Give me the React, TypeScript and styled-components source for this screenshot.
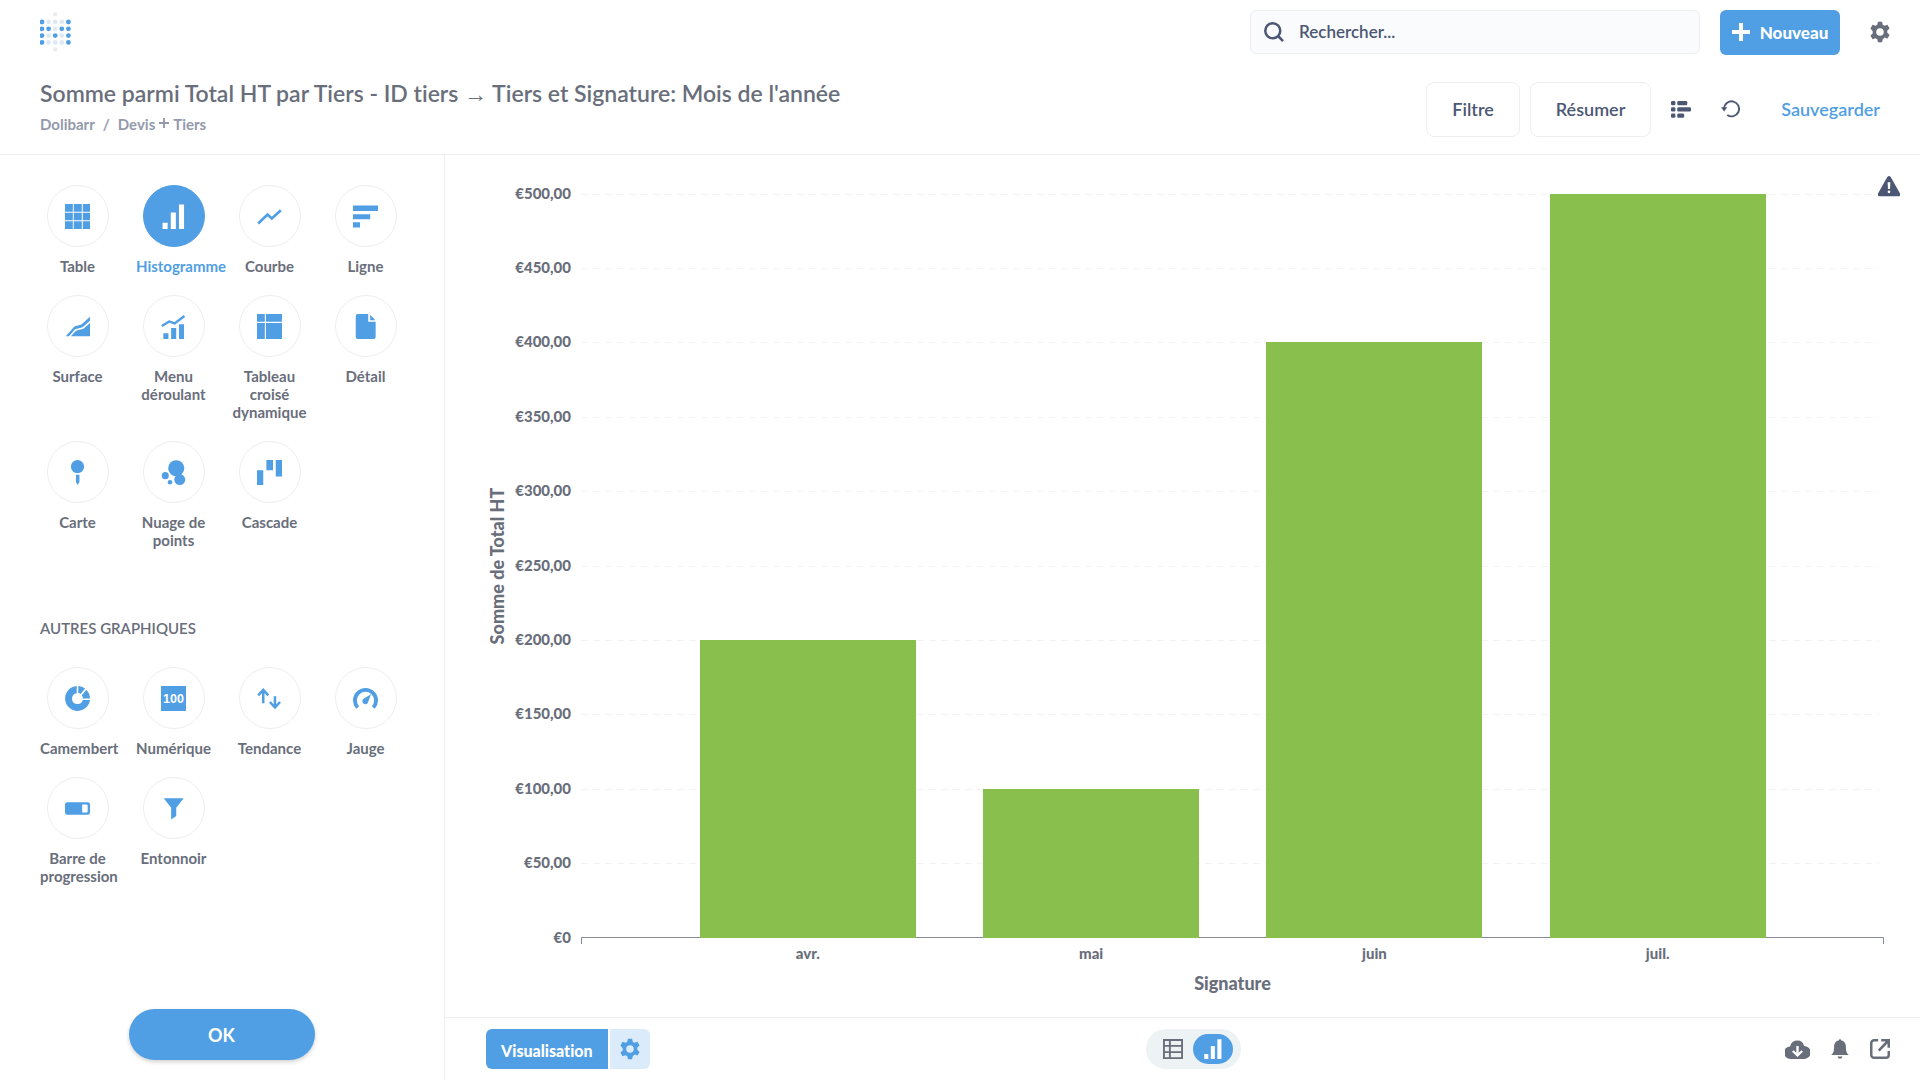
import React, { useLayoutEffect, useRef, useState } from "react";
import styled, { createGlobalStyle, css } from "styled-components";

const color = {
  brand: "#509ee3",
  brandLight: "#dcebfa",
  dark: "#4c5773",
  medium: "#696e7b",
  light: "#949aab",
  border: "#eeeef0",
  green: "#88bf4d",
};

const GlobalStyle = createGlobalStyle`
  *, *::before, *::after { box-sizing: border-box; }
  html, body, #root { height: 100%; }
  body {
    margin: 0;
    background: #fff;
    color: ${color.medium};
    font-family: Lato, "Liberation Sans", sans-serif;
    font-size: 15px;
    font-variant-ligatures: none;
  }
  button, input { font-family: inherit; font-variant-ligatures: inherit; }
  h1, h2, ul { margin: 0; padding: 0; }
`;

const Page = styled.div`
  display: flex;
  flex-direction: column;
  height: 100vh;
`;

const AppBar = styled.header`
  display: flex;
  align-items: center;
  gap: 20px;
  height: 64px;
  padding: 0 20px 0 40px;
`;

const HomeLink = styled.a`
  display: flex;
  margin-right: auto;
`;

const SearchBox = styled.label`
  display: flex;
  align-items: center;
  gap: 15px;
  width: 450px;
  height: 44px;
  padding: 0 13px;
  border: 1px solid ${color.border};
  border-radius: 6px;
  background: #f9fbfc;
  color: ${color.dark};
`;

const SearchInput = styled.input`
  flex: 1;
  min-width: 0;
  border: 0;
  outline: 0;
  padding: 0 0 2px;
  background: transparent;
  color: ${color.dark};
  font-size: 17px;
  font-weight: 600;
  &::placeholder { color: ${color.dark}; opacity: 1; }
`;

const plainButton = css`
  display: inline-flex;
  align-items: center;
  justify-content: center;
  padding: 0;
  border: 0;
  background: transparent;
  cursor: pointer;
`;

const NewButton = styled.button`
  ${plainButton}
  gap: 10px;
  width: 120px;
  height: 45px;
  border-radius: 6px;
  background: ${color.brand};
  color: #fff;
  font-size: 17px;
  font-weight: 900;
`;

const IconButton = styled.button<{ $tone?: string; $wide?: boolean }>`
  ${plainButton}
  width: ${(p) => (p.$wide ? 46 : 40)}px;
  height: 40px;
  color: ${(p) => p.$tone ?? color.medium};
`;

const QuestionHeader = styled.div`
  display: flex;
  align-items: center;
  justify-content: space-between;
  height: 91px;
  padding: 0 40px;
  border-bottom: 1px solid ${color.border};
`;

const TitleBlock = styled.div`
  display: flex;
  flex-direction: column;
  gap: 5px;
  padding-bottom: 7px;
`;

const Title = styled.h1`
  color: ${color.medium};
  font-size: 23px;
  line-height: 30px;
  font-weight: 600;
`;

const Arrow = styled.span`
  font-family: "Liberation Sans", sans-serif;
  font-weight: 400;
`;

const Breadcrumb = styled.nav`
  display: flex;
  gap: 8px;
  color: ${color.light};
  font-size: 15px;
  line-height: 20px;
  font-weight: 700;
`;

const CrumbLink = styled.a`
  display: inline-flex;
  align-items: center;
  gap: 4px;
  color: inherit;
  text-decoration: none;
  svg { margin-bottom: 2px; }
`;

const Actions = styled.div`
  display: flex;
  align-items: center;
  gap: 10px;
`;

const OutlineButton = styled.button`
  ${plainButton}
  height: 55px;
  padding: 0 25px;
  border: 1px solid ${color.border};
  border-radius: 8px;
  color: ${color.dark};
  font-size: 18px;
  font-weight: 600;
`;

const SaveButton = styled.button`
  ${plainButton}
  height: 40px;
  margin-left: 20px;
  color: ${color.brand};
  font-size: 18px;
  font-weight: 600;
`;

const Body = styled.div`
  display: flex;
  flex: 1;
  min-height: 0;
`;

const Sidebar = styled.aside`
  display: flex;
  flex-direction: column;
  width: 445px;
  padding: 30px 41px 20px 40px;
  border-right: 1px solid ${color.border};
`;

const ChartGrid = styled.ul`
  display: grid;
  grid-template-columns: repeat(4, 75px);
  gap: 20px 21px;
  list-style: none;
`;

const ChartOption = styled.button<{ $active?: boolean }>`
  ${plainButton}
  flex-direction: column;
  justify-content: flex-start;
  gap: 10px;
  width: 100%;
  color: ${(p) => (p.$active ? color.brand : color.medium)};
  font-size: 15px;
  line-height: 18px;
  font-weight: 700;
`;

const Disc = styled.span<{ $active?: boolean }>`
  display: flex;
  align-items: center;
  justify-content: center;
  width: 62px;
  height: 62px;
  padding: 1px 1px 0 0;
  border: 1px solid ${(p) => (p.$active ? color.brand : color.border)};
  border-radius: 50%;
  background: ${(p) => (p.$active ? color.brand : "#fff")};
  color: ${(p) => (p.$active ? "#fff" : color.brand)};
`;

const OptionLabel = styled.span`
  width: 100%;
`;

const SectionTitle = styled.h2`
  margin: 69px 0 29px;
  color: ${color.medium};
  font-size: 15px;
  line-height: 20px;
  font-weight: 600;
  text-transform: uppercase;
`;

const DoneButton = styled.button`
  ${plainButton}
  align-self: center;
  width: 186px;
  height: 51px;
  margin-top: auto;
  border-radius: 26px;
  background: ${color.brand};
  box-shadow: 0 2px 4px rgba(0, 0, 0, 0.18);
  color: #fff;
  font-size: 18px;
  font-weight: 700;
`;

const Main = styled.main`
  display: flex;
  flex: 1;
  flex-direction: column;
  min-width: 0;
`;

const ChartArea = styled.div`
  position: relative;
  flex: 1;
  min-height: 0;
  overflow: hidden;
`;

const ChartSvg = styled.svg`
  display: block;
  width: 100%;
  height: 100%;
  font-weight: 900;
`;

const Warning = styled.span`
  position: absolute;
  top: 20px;
  right: 20px;
  display: flex;
  color: ${color.dark};
`;

const Footer = styled.footer`
  display: grid;
  grid-template-columns: 1fr auto 1fr;
  align-items: center;
  height: 63px;
  padding: 0 20px 0 41px;
  border-top: 1px solid ${color.border};
`;

const VizGroup = styled.div`
  display: flex;
  gap: 2px;
`;

const VizButton = styled.button`
  ${plainButton}
  height: 40px;
  padding: 2px 15px 0;
  border-radius: 6px 0 0 6px;
  background: ${color.brand};
  color: #fff;
  font-size: 16px;
  font-weight: 900;
`;

const VizSettings = styled.button`
  ${plainButton}
  width: 40px;
  height: 40px;
  border-radius: 0 6px 6px 0;
  background: ${color.brandLight};
  color: ${color.brand};
`;

const Toggle = styled.div`
  display: flex;
  align-items: center;
  height: 40px;
  padding: 0 8px 0 7px;
  border-radius: 20px;
  background: #edf2f5;
`;

const ToggleButton = styled.button<{ $active?: boolean }>`
  ${plainButton}
  width: 40px;
  height: 30px;
  border-radius: 15px;
  background: ${(p) => (p.$active ? color.brand : "transparent")};
  color: ${(p) => (p.$active ? "#fff" : color.medium)};
`;

const FooterActions = styled.div`
  display: flex;
  justify-content: flex-end;
`;

type IconProps = { size?: number; viewBox?: string; children: React.ReactNode };
const Icon = ({ size = 25, viewBox = "0 0 32 32", children }: IconProps) => (
  <svg width={size} height={size} viewBox={viewBox} fill="currentColor" aria-hidden="true">
    {children}
  </svg>
);

const GEAR =
  "M13 1h6l1 4.400 2.600 1.500 4.300-1.300 3 5.200-3.300 3.100v3.200l3.300 3.100-3 5.200-4.300-1.300L20 26.600 19 31h-6l-1-4.400-2.600-1.500-4.300 1.300-3-5.200 3.300-3.100v-3.200L2.100 10.800l3-5.200 4.300 1.300L12 5.400zM16 10.500a5.500 5.500 0 1 0 0 11 5.500 5.500 0 1 0 0-11z";
const GearIcon = ({ size = 22 }: { size?: number }) => (
  <Icon size={size}><path fillRule="evenodd" d={GEAR} /></Icon>
);

const BarsIcon = ({ size = 25 }: { size?: number }) => (
  <Icon size={size}>
    <path d="M2 24h6.500v8H2zM12.500 11H19v21h-6.500zM23 .500h6.500V32H23z" />
  </Icon>
);

const LOGO_DOTS: [number, number, boolean][] = [];
["10001", "11011", "10101", "10001"].forEach((row, r) =>
  [...row].forEach((cell, c) => LOGO_DOTS.push([2 + c * 6.6, 10 + r * 6.8, cell === "1"]))
);
const Logo = () => (
  <svg width="32" height="40" viewBox="0 0 32 40" aria-hidden="true">
    {LOGO_DOTS.map(([x, y, on]) => (
      <circle key={`${x}-${y}`} cx={x} cy={y} r="2.400" fill={on ? color.brand : "#dfe9f3"} />
    ))}
    <circle cx="15.200" cy="2.300" r="2.200" fill="#e9edf2" />
    <circle cx="15.200" cy="37.500" r="2.200" fill="#e9edf2" />
  </svg>
);

type Option = { label: string; icon: React.ReactNode; active?: boolean };

const mainCharts: Option[] = [
  {
    label: "Table",
    icon: <Icon><path d="M0 0h10v10H0zM11.200 0h10.300v10H11.200zM22.800 0H32v10h-9.200zM0 11.200h10v9.600H0zM11.200 11.200h10.300v9.600H11.200zM22.800 11.200H32v9.600h-9.200zM0 22h10v10H0zM11.200 22h10.300v10H11.200zM22.800 22H32v10h-9.200z" /></Icon>,
  },
  { label: "Histogramme", active: true, icon: <BarsIcon /> },
  {
    label: "Courbe",
    icon: <Icon><path d="M1.500 25 13.500 13.500l5.500 5L30.500 8" fill="none" stroke="currentColor" strokeWidth="3.400" /></Icon>,
  },
  { label: "Ligne", icon: <Icon><path d="M0 2h32v7H0zM0 13h22v6.500H0zM0 23.500h9V30H0z" /></Icon> },
  {
    label: "Surface",
    icon: <Icon><path d="M1 28.500 12 16l9-2.500L32 3.500v5L22.500 17 13 19.500 5 28.500zM7.500 28.500 14 21.500l9.500-2.500L32 11.500v17z" /></Icon>,
  },
  {
    label: "Menu déroulant",
    icon: (
      <Icon>
        <path d="M3 24.500h6.500V32H3zM13 18h6.500v14H13zM23 13h6.500v19H23z" />
        <path d="M1 15.500 10.500 9.500l7 2.500L30 2.500" fill="none" stroke="currentColor" strokeWidth="3" />
      </Icon>
    ),
  },
  { label: "Tableau croisé dynamique", icon: <Icon><path d="M0 0h10v10H0zM11.500 0H32v10H11.500zM0 11.500h10V32H0zM11.500 11.500H32V32H11.500z" /></Icon> },
  { label: "Détail", icon: <Icon><path d="M6 0h13.500v10h9.500v19.500a2.500 2.500 0 0 1-2.500 2.500H6a2.500 2.500 0 0 1-2.500-2.500v-27A2.500 2.500 0 0 1 6 0zM22 1l6.500 7H22z" /></Icon> },
  { label: "Carte", icon: <Icon><circle cx="16" cy="8.500" r="8.500" /><path d="M14 19h4.500v9L16.200 32 14 28z" /></Icon> },
  {
    label: "Nuage de points",
    icon: <Icon><circle cx="19.500" cy="10.500" r="10.300" /><circle cx="24" cy="25" r="7" /><circle cx="5.500" cy="20" r="4.500" /><circle cx="11.500" cy="28.500" r="2.900" /></Icon>,
  },
  { label: "Cascade", icon: <Icon><path d="M0 13h8v19H0zM12 0h8.500v13H12zM24 0h8v21h-8z" /></Icon> },
];

const otherCharts: Option[] = [
  {
    label: "Camembert",
    icon: (
      <Icon>
        <path d="M15 0v9.200A7 7 0 1 0 22.800 18H32A16 16 0 1 1 15 0z" />
        <path d="M17 0a16 16 0 0 1 8.700 3.300L20 10.300a7 7 0 0 0-3-1.200zM27.300 4.700A16 16 0 0 1 32 16h-9.200a7 7 0 0 0-1.300-4.300z" />
      </Icon>
    ),
  },
  {
    label: "Numérique",
    icon: (
      <Icon>
        <path d="M0 0h32v32H0z" />
        <text x="16" y="21.500" fill="#fff" fontSize="16" fontWeight="700" textAnchor="middle" fontFamily="'Liberation Sans', sans-serif">100</text>
      </Icon>
    ),
  },
  {
    label: "Tendance",
    icon: <Icon><path d="M8 22V5M1.500 12 8 5l6.500 7M23 13v15M16.500 20.500l6.500 7 6.500-7" fill="none" stroke="currentColor" strokeWidth="3.200" /></Icon>,
  },
  {
    label: "Jauge",
    icon: (
      <Icon>
        <path d="M6 27.500A13.500 13.500 0 1 1 26 27.500" fill="none" stroke="currentColor" strokeWidth="5" />
        <path d="M23 10.500 19.500 20a3.800 3.800 0 1 1-5.500-4z" />
      </Icon>
    ),
  },
  {
    label: "Barre de progression",
    icon: <Icon><path fillRule="evenodd" d="M3 8h26a3 3 0 0 1 3 3v10a3 3 0 0 1-3 3H3a3 3 0 0 1-3-3V11a3 3 0 0 1 3-3zM22 11v10h5.500a1.500 1.500 0 0 0 1.500-1.500v-7a1.500 1.500 0 0 0-1.500-1.500z" /></Icon>,
  },
  { label: "Entonnoir", icon: <Icon><path d="M3.500 3h25.500L19.500 15v10.500L13 30V15z" /></Icon> },
];

const Options = ({ items }: { items: Option[] }) => (
  <ChartGrid>
    {items.map((o) => (
      <li key={o.label}>
        <ChartOption type="button" $active={o.active} aria-pressed={!!o.active}>
          <Disc $active={o.active}>{o.icon}</Disc>
          <OptionLabel>{o.label}</OptionLabel>
        </ChartOption>
      </li>
    ))}
  </ChartGrid>
);

const data = [
  { month: "avr.", value: 200 },
  { month: "mai", value: 100 },
  { month: "juin", value: 400 },
  { month: "juil.", value: 500 },
];
const MAX = 500;
const margin = { top: 39, right: 36, bottom: 79, left: 136 };

const Histogram = () => {
  const box = useRef<HTMLDivElement>(null);
  const [size, setSize] = useState({ w: 1475, h: 862 });

  useLayoutEffect(() => {
    const el = box.current;
    if (!el) return;
    const measure = () => setSize({ w: el.clientWidth, h: el.clientHeight });
    measure();
    const observer = new ResizeObserver(measure);
    observer.observe(el);
    return () => observer.disconnect();
  }, []);

  const left = margin.left;
  const right = size.w - margin.right;
  const bottom = size.h - margin.bottom;
  const plotW = right - left;
  const plotH = bottom - margin.top;
  const step = plotW / 4.6;
  const barW = Math.floor(step * 0.765);
  const y = (v: number) => Math.floor(bottom - (v / MAX) * plotH);
  const ticks = Array.from({ length: 11 }, (_, i) => i * 50);

  return (
    <ChartArea ref={box}>
      <ChartSvg role="img" aria-label="Somme de Total HT par mois de signature">
        {ticks.slice(1).map((t) => (
          <line key={t} x1={left} x2={right - 5} y1={y(t) + 0.5} y2={y(t) + 0.5} stroke="#f3f3f4" strokeDasharray="7 5" />
        ))}
        {ticks.map((t) => (
          <text key={t} x={left - 10} y={y(t) + 5} textAnchor="end" fontSize="15" fill={color.medium}>
            {t === 0 ? "€0" : `€${t},00`}
          </text>
        ))}
        <path d={`M${left + 0.5} ${bottom + 6}V${bottom - 0.5}H${right - 0.5}V${bottom + 6}`} fill="none" stroke="#858a99" />
        {data.map((d, i) => {
          const center = left + step * (i + 0.801);
          return (
            <g key={d.month}>
              <rect x={Math.round(center - barW / 2)} y={y(d.value)} width={barW} height={bottom - y(d.value)} fill={color.green} />
              <text x={center} y={bottom + 21} textAnchor="middle" fontSize="15" fill={color.medium}>{d.month}</text>
            </g>
          );
        })}
        <text x={left + plotW / 2} y={bottom + 52} textAnchor="middle" fontSize="18" fill={color.medium}>Signature</text>
        <text transform={`translate(59 ${margin.top + plotH / 2}) rotate(-90)`} textAnchor="middle" fontSize="18" fill={color.medium}>
          Somme de Total HT
        </text>
      </ChartSvg>
      <Warning role="img" aria-label="Avertissement">
        <Icon size={22}>
          <path fillRule="evenodd" d="M18.500 3 32 27q1 4-2.500 4H2.500Q-1 31 0 27L13.500 3q2.500-3 5 0zM14 10.500l.500 10h3l.500-10zM16 22.500a2 2 0 1 0 0 4 2 2 0 1 0 0-4z" />
        </Icon>
      </Warning>
    </ChartArea>
  );
};

export default function App() {
  return (
    <>
      <GlobalStyle />
      <Page>
        <AppBar>
          <HomeLink href="#" aria-label="Accueil"><Logo /></HomeLink>
          <SearchBox>
            <Icon size={20}><path d="M14 2a12 12 0 1 0 0 24 12 12 0 0 0 0-24zM22 22l8.500 8.500" fill="none" stroke="currentColor" strokeWidth="4" /></Icon>
            <SearchInput type="search" placeholder="Rechercher..." aria-label="Rechercher" />
          </SearchBox>
          <NewButton type="button">
            <Icon size={18}><path d="M12.500 0h7v12.500H32v7H19.500V32h-7V19.500H0v-7h12.500z" /></Icon>
            Nouveau
          </NewButton>
          <IconButton type="button" aria-label="Paramètres"><GearIcon /></IconButton>
        </AppBar>

        <QuestionHeader>
          <TitleBlock>
            <Title>Somme parmi Total HT par Tiers - ID tiers <Arrow>→</Arrow> Tiers et Signature: Mois de l'année</Title>
            <Breadcrumb aria-label="Source">
              <CrumbLink href="#">Dolibarr</CrumbLink>
              <span>/</span>
              <CrumbLink href="#">
                Devis
                <Icon size={10}><path d="M13 0h6v13h13v6H19v13h-6V19H0v-6h13z" /></Icon>
                Tiers
              </CrumbLink>
            </Breadcrumb>
          </TitleBlock>
          <Actions>
            <OutlineButton type="button">Filtre</OutlineButton>
            <OutlineButton type="button">Résumer</OutlineButton>
            <IconButton type="button" $tone={color.dark} aria-label="Éditeur">
              <Icon size={20}>
                <rect x="0" y="3" width="7" height="7" rx="2" />
                <rect x="10" y="3" width="16" height="7" rx="2" />
                <rect x="0" y="13" width="7" height="7" rx="2" />
                <rect x="10" y="13" width="22" height="7" rx="2" />
                <rect x="0" y="23" width="7" height="7" rx="2" />
                <rect x="10" y="23" width="11" height="7" rx="2" />
              </Icon>
            </IconButton>
            <IconButton type="button" $tone={color.dark} aria-label="Actualiser">
              <Icon size={20}>
                <path d="M5 15a12 12 0 1 1 5 10.500" fill="none" stroke="currentColor" strokeWidth="3" />
                <path d="M0 13h10l-5 7z" />
              </Icon>
            </IconButton>
            <SaveButton type="button">Sauvegarder</SaveButton>
          </Actions>
        </QuestionHeader>

        <Body>
          <Sidebar>
            <Options items={mainCharts} />
            <SectionTitle>Autres graphiques</SectionTitle>
            <Options items={otherCharts} />
            <DoneButton type="button">OK</DoneButton>
          </Sidebar>
          <Main>
            <Histogram />
            <Footer>
              <VizGroup>
                <VizButton type="button">Visualisation</VizButton>
                <VizSettings type="button" aria-label="Options de visualisation"><GearIcon /></VizSettings>
              </VizGroup>
              <Toggle>
                <ToggleButton type="button" aria-label="Afficher le tableau">
                  <Icon size={20}>
                    <path d="M1.500 1.500h29v29h-29zM1.500 11h29M1.500 21h29M11 1.500v29" fill="none" stroke="currentColor" strokeWidth="3" />
                  </Icon>
                </ToggleButton>
                <ToggleButton type="button" $active aria-label="Afficher le graphique"><BarsIcon size={20} /></ToggleButton>
              </Toggle>
              <FooterActions>
                <IconButton type="button" $wide aria-label="Télécharger">
                  <Icon size={25}>
                    <path fillRule="evenodd" d="M16 4.500a8.500 8.500 0 0 1 8.300 7A8 8 0 0 1 25 28H7a8 8 0 0 1-.500-16A9.800 9.800 0 0 1 16 4.500zM14.500 11.500v8.500L11 17l-2 2 7 6.500 7-6.500-2-2-3.500 3v-8.500z" />
                  </Icon>
                </IconButton>
                <IconButton type="button" aria-label="Alertes">
                  <Icon size={20}>
                    <path d="M14 2.500a2 2 0 0 1 4 0c5.500 1 7.500 5.500 7.500 10.500 0 7 1.500 9.500 4.500 12.500H2c3-3 4.500-5.500 4.500-12.500C6.500 8 8.500 3.500 14 2.500zM12 28h8q-1 3.500-4 3.500T12 28z" />
                  </Icon>
                </IconButton>
                <IconButton type="button" aria-label="Partager">
                  <Icon size={20}>
                    <path d="M13 2H6.500A4.500 4.500 0 0 0 2 6.500v19A4.500 4.500 0 0 0 6.500 30h19a4.500 4.500 0 0 0 4.500-4.500V19" fill="none" stroke="currentColor" strokeWidth="4" />
                    <path d="M18 0h14v14h-4V7L15.500 20l-3-3L25 4h-7z" />
                  </Icon>
                </IconButton>
              </FooterActions>
            </Footer>
          </Main>
        </Body>
      </Page>
    </>
  );
}
